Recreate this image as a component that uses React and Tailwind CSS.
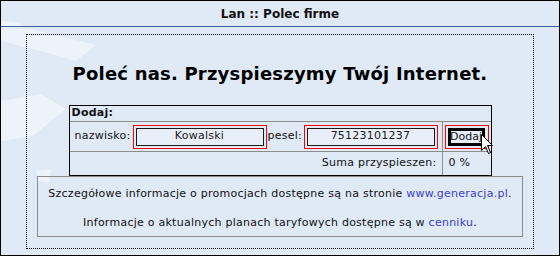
import React from 'react';

const font = { fontFamily: '"DejaVu Sans", Verdana, sans-serif' };

const Pole = ({ value }) => (
  <div className="border border-[#ff0000] p-[2px]">
    <div className="w-[128px] h-[18px] border border-[#1a1a1a] bg-[#e9eff9] flex items-center justify-center text-[11px] text-[#1a1a1a]">
      {value}
    </div>
  </div>
);

const Cursor = () => (
  <svg className="absolute left-[480px] top-[133px]" width="13" height="21" viewBox="0 0 13 21">
    <path d="M0.5 0.5 L0.5 16.5 L4.5 12.5 L7.5 19.5 L9.5 18.5 L6.5 11.5 L11.5 11.5 Z" fill="#fff" stroke="#000" strokeWidth="1" />
  </svg>
);

export default function App() {
  return (
    <div style={font} className="relative w-[560px] h-[256px] overflow-hidden border border-black bg-[#dfeaf6] text-[#111]">
      <svg className="absolute left-0 top-0" width="160" height="200" viewBox="0 0 160 200">
        <polygon points="0,20 18,22 22,27 0,28" fill="#edf3fa" />
        <polygon points="0,28 30,28 95,44 75,60 40,50 0,40" fill="#edf3fa" />
        <polygon points="0,100 40,93 65,108 32,135 0,140" fill="#edf3fa" />
        <polygon points="35,170 50,168 48,182 37,180" fill="#edf3fa" />
      </svg>

      <div className="relative h-[26px] border-b border-[#3e5f95] flex items-center justify-center text-[12px] font-bold">
        Lan :: Polec firme
      </div>

      <div className="relative ml-[25px] mt-[7px] w-[508px] h-[215px] border border-dotted border-black flex flex-col items-center">
        <h1 className="mt-[28px] h-[30px] text-[18px] leading-[22px] font-bold text-black tracking-[0.2px]">
          Poleć nas. Przyspieszymy Twój Internet.
        </h1>

        <div className="mt-[12px] w-[423px] border border-black text-[11px] tracking-[0.25px]">
          <div className="h-[16px] px-[2px] flex items-center font-bold border-b border-[#8c8c8c]">Dodaj:</div>
          <div className="flex h-[30px] border-b border-[#8c8c8c]">
            <div className="w-[373px] border-r border-[#8c8c8c] pl-[5px] flex items-center">
              <span className="w-[58px]">nazwisko:</span>
              <Pole value="Kowalski" />
              <span className="w-[37px] pl-[1px]">pesel:</span>
              <Pole value="75123101237" />
            </div>
            <div className="flex-1 flex items-center pl-[2px]">
              <div className="border border-[#ff0000] pl-[2px] pr-[3px] py-[2px]">
                <button className="w-[37px] h-[18px] border-[3px] border-black bg-[#e9eff9] flex items-center justify-center text-[11px] leading-none tracking-normal">
                  Dodaj
                </button>
              </div>
            </div>
          </div>
          <div className="flex h-[23px]">
            <div className="w-[373px] border-r border-[#8c8c8c] pr-[5px] flex items-center justify-end">Suma przyspieszen:</div>
            <div className="flex-1 flex items-center pl-[6px]">0 %</div>
          </div>
        </div>

        <div className="w-[486px] h-[61px] border border-[#8a8a8a] flex flex-col items-center pt-[9px] gap-[12px] text-[11px] tracking-[0.25px]">
          <p>
            Szczegółowe informacje o promocjach dostępne są na stronie{' '}
            <a className="text-[#3c3cc8]">www.generacja.pl</a>.
          </p>
          <p>
            Informacje o aktualnych planach taryfowych dostępne są w <a className="text-[#3c3cc8]">cenniku</a>.
          </p>
        </div>
      </div>

      <Cursor />
    </div>
  );
}
